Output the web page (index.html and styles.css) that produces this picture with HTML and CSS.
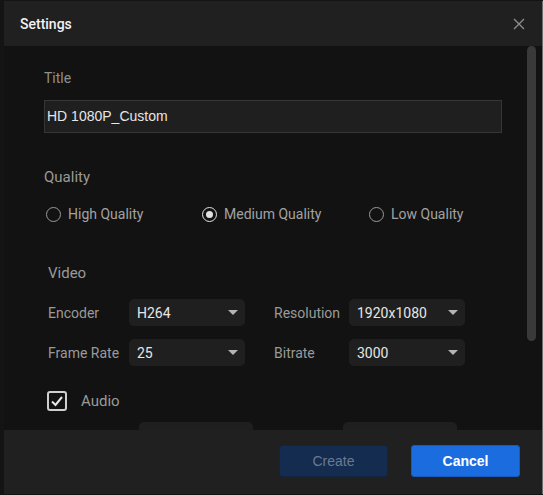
FILE: index.html
```html
<!DOCTYPE html>
<html>
<head>
<meta charset="utf-8">
<link rel="stylesheet" href="styles.css">
</head>
<body>
<div class="page">
  <div class="dialog">
    <div class="header">
      <span class="header-title">Settings</span>
      <svg class="close" width="12" height="12" viewBox="0 0 12 12"><path d="M1 1L11 11M11 1L1 11" stroke="#8e8e8e" stroke-width="1.4" fill="none"/></svg>
    </div>
    <div class="body">
      <div class="content">
        <div class="label">Title</div>
        <div class="input">HD 1080P_Custom</div>

        <div class="label quality-label">Quality</div>
        <div class="radios">
          <div class="radio"><span class="circle"></span><span>High Quality</span></div>
          <div class="radio"><span class="circle checked"></span><span>Medium Quality</span></div>
          <div class="radio"><span class="circle"></span><span>Low Quality</span></div>
        </div>

        <div class="label video-label">Video</div>
        <div class="grid">
          <span class="field-label">Encoder</span>
          <div class="select"><span>H264</span><span class="arrow"></span></div>
          <span class="field-label col2">Resolution</span>
          <div class="select"><span>1920x1080</span><span class="arrow"></span></div>
          <span class="field-label">Frame Rate</span>
          <div class="select"><span>25</span><span class="arrow"></span></div>
          <span class="field-label col2">Bitrate</span>
          <div class="select"><span>3000</span><span class="arrow"></span></div>
        </div>

        <div class="check-row">
          <span class="checkbox"><svg width="14" height="12" viewBox="0 0 14 12"><path d="M2 6.5L5.5 10L12 2" stroke="#e8e8e8" stroke-width="2" fill="none"/></svg></span>
          <span class="check-text">Audio</span>
        </div>
        <div class="audio-grid">
          <div class="select empty"></div>
          <div class="select empty"></div>
        </div>
      </div>
      <div class="track"><div class="thumb"></div></div>
    </div>
    <div class="footer">
      <button class="btn btn-create">Create</button>
      <button class="btn btn-cancel">Cancel</button>
    </div>
  </div>
</div>
</body>
</html>
```
FILE: styles.css
```css
* { box-sizing: border-box; }
html, body { margin: 0; padding: 0; }
body {
  background: #141414;
  width: 543px;
  height: 495px;
  overflow: hidden;
  font-family: Roboto, "Liberation Sans", sans-serif;
}
.page {
  padding: 1px 0 0 4px;
  height: 495px;
}
.dialog {
  width: 539px;
  height: 493px;
  display: flex;
  flex-direction: column;
  background: #121212;
  border-right: 1px solid #6e6e6e;
}
.header {
  height: 45px;
  flex: none;
  background: #202020;
  display: flex;
  align-items: center;
  justify-content: space-between;
  padding: 0 17px 0 16px;
}
.header-title {
  color: #f2f2f2;
  font-size: 14px;
  font-weight: 500;
}
.close { display: block; margin-top: 1px; }
.body {
  flex: 1;
  display: flex;
  overflow: hidden;
  min-height: 0;
}
.content {
  flex: 1;
  padding: 22px 0 0 40px;
}
.track {
  width: 17px;
  flex: none;
  padding: 0 6px 0 2px;
}
.thumb {
  width: 9px;
  height: 295px;
  background: #393939;
  border-radius: 5px;
}
.label {
  color: #8f8f8f;
  font-size: 14px;
  line-height: 20px;
  height: 20px;
}
.input {
  margin-top: 12px;
  width: 458px;
  height: 33px;
  background: #1f1f1f;
  border: 1px solid #363636;
  color: #e6e6e6;
  font-family: "Liberation Sans", Arial, sans-serif;
  font-size: 14px;
  line-height: 30px;
  padding-left: 2px;
}
.quality-label { margin-top: 34px; font-size: 15px; color: #9a9a9a; }
.radios {
  margin-top: 17px;
  height: 20px;
  display: grid;
  grid-template-columns: 156px 167px auto;
  padding-left: 2px;
}
.radio {
  display: flex;
  align-items: center;
  gap: 7px;
  color: #a2a2a2;
  font-size: 14px;
}
.circle {
  width: 15px;
  height: 15px;
  border-radius: 50%;
  border: 1.5px solid #9a9a9a;
  display: flex;
  align-items: center;
  justify-content: center;
}
.circle.checked { border-color: #e0e0e0; }
.circle.checked::after {
  content: "";
  width: 7px;
  height: 7px;
  border-radius: 50%;
  background: #e0e0e0;
}
.video-label { margin-top: 39px; padding-left: 4px; font-size: 15px; color: #9a9a9a; }
.grid {
  margin-top: 16px;
  padding-left: 4px;
  display: grid;
  grid-template-columns: 81px 116px 29px 75px 116px;
  row-gap: 13px;
  align-items: center;
}
.grid .col2 { grid-column: 4; }
.field-label {
  color: #9a9a9a;
  font-size: 14px;
}
.select {
  height: 27px;
  background: #1f1f1f;
  border-radius: 5px;
  display: flex;
  align-items: center;
  justify-content: space-between;
  padding: 0 7px 0 8px;
  color: #e6e6e6;
  font-size: 14px;
}
.arrow {
  width: 0;
  height: 0;
  border-left: 5px solid transparent;
  border-right: 5px solid transparent;
  border-top: 5px solid #b4b4b4;
}
.check-row {
  margin-top: 25px;
  padding-left: 3px;
  display: flex;
  align-items: center;
  height: 20px;
}
.checkbox {
  width: 20px;
  height: 20px;
  border: 2px solid #cfcfcf;
  border-radius: 3px;
  display: flex;
  align-items: center;
  justify-content: center;
}
.check-text {
  margin-left: 14px;
  color: #9a9a9a;
  font-size: 15px;
}
.audio-grid {
  margin-top: 11px;
  padding-left: 95px;
  display: grid;
  grid-template-columns: 114px 114px;
  column-gap: 90px;
}
.footer {
  height: 64px;
  flex: none;
  background: #202020;
  display: flex;
  justify-content: flex-end;
  align-items: flex-start;
  gap: 23px;
  padding: 15px 22px 0 0;
}
.btn {
  width: 109px;
  height: 32px;
  border-radius: 3px;
  border: 1px solid transparent;
  font-family: "Liberation Sans", Arial, sans-serif;
  font-size: 14px;
  padding: 0;
}
.btn-create {
  background: #142c4f;
  border-color: #112440;
  color: #6a7a92;
}
.btn-cancel {
  background: #1b6cdf;
  border-color: #165bbd;
  color: #ffffff;
  font-weight: bold;
}
```
